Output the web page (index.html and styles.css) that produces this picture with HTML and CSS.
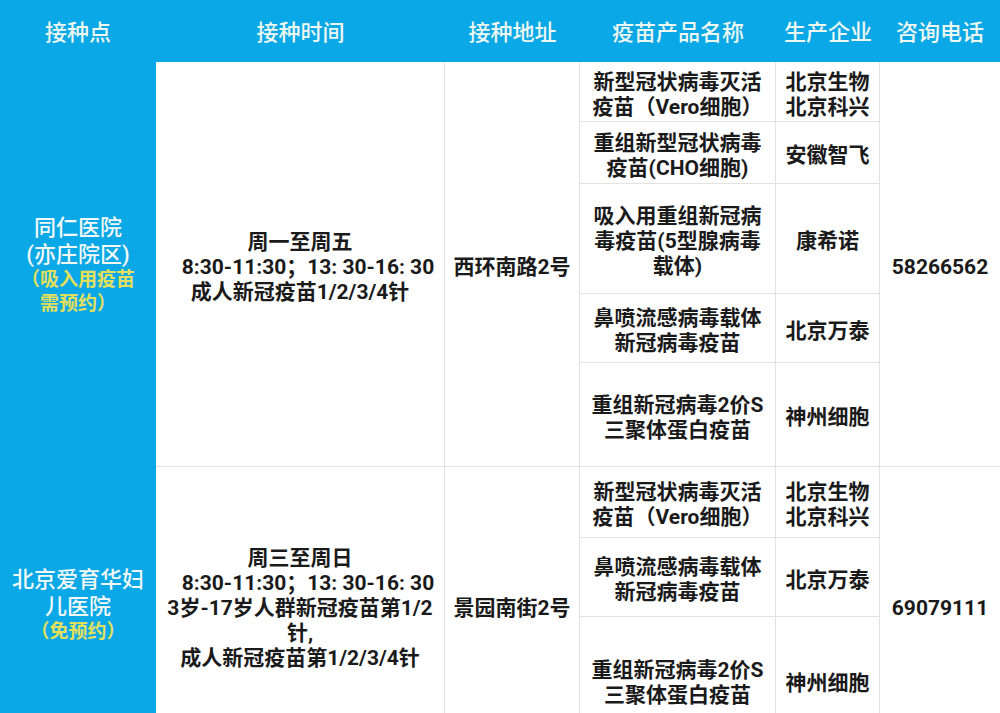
FILE: index.html
```html
<!DOCTYPE html>
<html lang="zh-CN">
<head>
<meta charset="utf-8">
<title>接种点</title>
<link rel="stylesheet" href="styles.css">
</head>
<body>
<div class="table">
  <div class="cell head">接种点</div>
  <div class="cell head">接种时间</div>
  <div class="cell head">接种地址</div>
  <div class="cell head">疫苗产品名称</div>
  <div class="cell head">生产企业</div>
  <div class="cell head">咨询电话</div>

  <div class="cell site span5">
    <div>同仁医院<br>(亦庄院区)</div>
    <div class="note">（吸入用疫苗<br>需预约）</div>
  </div>
  <div class="cell body span5 br bb">
    <div>周一至周五</div>
    <div class="shift">8:30-11:30；13: 30-16: 30</div>
    <div>成人新冠疫苗1/2/3/4针</div>
  </div>
  <div class="cell body span5 br bb">西环南路2号</div>
  <div class="cell body br bb">新型冠状病毒灭活<br>疫苗（Vero细胞）</div>
  <div class="cell body br bb">北京生物<br>北京科兴</div>
  <div class="cell body span5 bb">58266562</div>
  <div class="cell body br bb">重组新型冠状病毒<br>疫苗(CHO细胞)</div>
  <div class="cell body br bb">安徽智飞</div>
  <div class="cell body br bb">吸入用重组新冠病<br>毒疫苗(5型腺病毒<br>载体)</div>
  <div class="cell body br bb">康希诺</div>
  <div class="cell body br bb">鼻喷流感病毒载体<br>新冠病毒疫苗</div>
  <div class="cell body br bb">北京万泰</div>
  <div class="cell body br bb">重组新冠病毒2价S<br>三聚体蛋白疫苗</div>
  <div class="cell body br bb">神州细胞</div>

  <div class="cell site span3">
    <div>北京爱育华妇<br>儿医院</div>
    <div class="note">（免预约）</div>
  </div>
  <div class="cell body span3 br">
    <div>周三至周日</div>
    <div class="shift">8:30-11:30；13: 30-16: 30</div>
    <div>3岁-17岁人群新冠疫苗第1/2</div>
    <div>针,</div>
    <div>成人新冠疫苗第1/2/3/4针</div>
  </div>
  <div class="cell body span3 br">景园南街2号</div>
  <div class="cell body br bb">新型冠状病毒灭活<br>疫苗（Vero细胞）</div>
  <div class="cell body br bb">北京生物<br>北京科兴</div>
  <div class="cell body span3">69079111</div>
  <div class="cell body br bb">鼻喷流感病毒载体<br>新冠病毒疫苗</div>
  <div class="cell body br bb">北京万泰</div>
  <div class="cell body br">重组新冠病毒2价S<br>三聚体蛋白疫苗</div>
  <div class="cell body br">神州细胞</div>
</div>
</body>
</html>
```

FILE: styles.css
```css
html, body {
  margin: 0;
  padding: 0;
}

body {
  width: 1000px;
  height: 713px;
  overflow: hidden;
  background: #ffffff;
  font-family: Roboto, "Noto Sans CJK SC", sans-serif;
}

.table {
  display: grid;
  grid-template-columns: 156px 289px 135px 196px 104px 120px;
  grid-template-rows: 62px 60px 62px 110px 69px 104px 71px 79px 126px;
}

.cell {
  display: flex;
  flex-direction: column;
  align-items: center;
  justify-content: center;
  text-align: center;
  box-sizing: border-box;
  white-space: nowrap;
}

.head {
  background: #0aa8e6;
  color: #eef7f1;
  font-size: 22px;
  line-height: 26px;
  font-weight: 500;
  padding-top: 3px;
}

.site {
  background: #0aa8e6;
  color: #f3f8f6;
  font-size: 22px;
  line-height: 27px;
  font-weight: 500;
}

.site .note {
  color: #e4e05c;
  font-size: 19px;
  line-height: 24px;
  font-weight: 700;
}

.body {
  color: #1a1a1a;
  font-size: 21px;
  line-height: 25px;
  font-weight: 700;
  padding-top: 6px;
}

.shift {
  padding-left: 16px;
}

.span5 {
  grid-row: span 5;
}

.span3 {
  grid-row: span 3;
}

.br {
  border-right: 1px solid #e2e2e2;
}

.bb {
  border-bottom: 1px solid #e2e2e2;
}
```
